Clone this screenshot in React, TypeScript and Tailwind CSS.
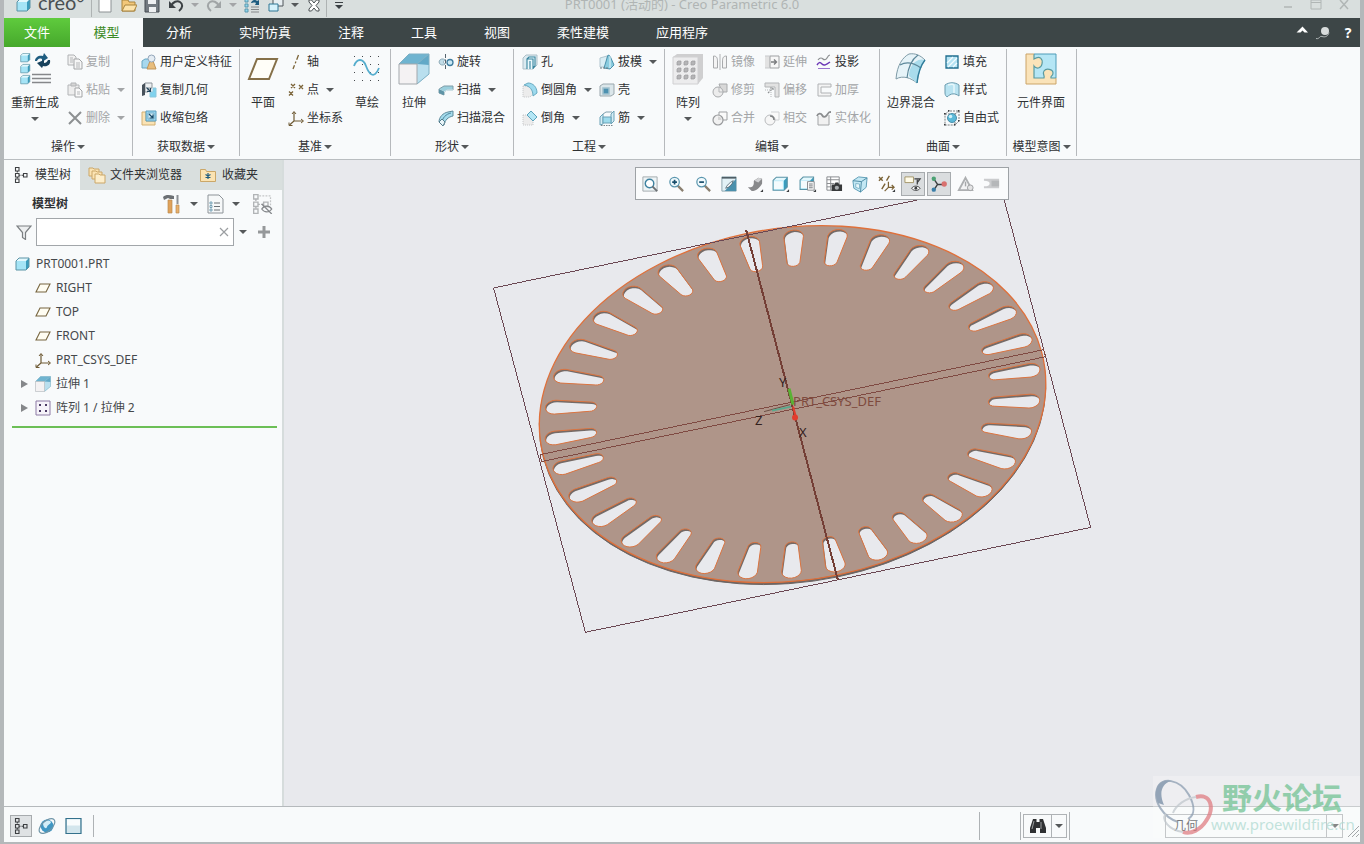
import React from "react";
import clsx from "clsx";

interface SvgProps {
  size?: number;
  box?: number;
  children: React.ReactNode;
}

const Svg: React.FC<SvgProps> = ({ size = 16, box = 16, children }) => (
  <svg width={size} height={size} viewBox={`0 0 ${box} ${box}`} fill="none" className="shrink-0" aria-hidden="true">
    {children}
  </svg>
);

const Caret = ({ light = false }: { light?: boolean }) => (
  <svg width="8" height="4" viewBox="0 0 8 4" className="shrink-0" aria-hidden="true">
    <path d="M0 0h8L4 4z" fill={light ? "#a3a5a7" : "#55585a"} />
  </svg>
);

/* ---------- shared shapes ---------- */

const Cube = ({ x = 0, y = 0, s = 1 }: { x?: number; y?: number; s?: number }) => (
  <g transform={`translate(${x} ${y}) scale(${s})`}>
    <path d="M1 5l3-3h10l-3 3z" fill="#e4f8fd" />
    <path d="M1 5h10v9H1z" fill="#a5e4f6" />
    <path d="M11 5l3-3v9l-3 3z" fill="#3b9cbc" />
    <path d="M1 5l3-3h10v9l-3 3H1z" stroke="#5a93a6" strokeWidth="1" />
  </g>
);

const TreeNodes = ({ color = "#3d3f42" }: { color?: string }) => (
  <g stroke={color} strokeWidth="1.1">
    <path d="M2.500 .500h3.500V4H2.500zM2.500 6.500h3.500V10H2.500zM2.500 12h3.500v3.500H2.500zM10.500 6.500H14V10h-3.500z" />
    <path d="M4.300 4v2.500M4.300 10v2M6 8.300h4.500" strokeDasharray="1.500 1" />
  </g>
);

const Plane = ({ w = 1.1 }: { w?: number }) => (
  <path d="M5 4h10l-4 8H1z" fill="#fffdf2" stroke="#776540" strokeWidth={w} />
);

const Csys = () => (
  <g stroke="#6f5b35" strokeWidth="1.2">
    <path d="M6 2v9h9M6 11l-4.500 4" />
    <path d="M4 4l2-2.500L8 4M13 9l2.500 2-2.500 2M1 12.500V15.500h3.500" strokeWidth="1" />
  </g>
);

const ExtrudeShape = () => (
  <g>
    <path d="M1 11L11 1h20v20L19 31V11z" fill="#a9d9ea" />
    <path d="M1 11L11 1h20L19 11z" fill="#6fb4d0" />
    <path d="M19 11L31 1v20L19 31z" fill="#b9dfee" />
    <path d="M19 11L31 1v11z" fill="#62a9c7" />
    <path d="M1 11L11 1h20v20L19 31M19 11L31 1" stroke="#7fb0c4" />
    <path d="M1 11h18v20H1z" fill="#f4f2f3" stroke="#a3a8ac" />
  </g>
);

/* ---------- ribbon icons ---------- */

const icons = {
  copy: (
    <Svg>
      <path d="M1 1h6l2 2v8H1z" fill="#f1f1f1" stroke="#b0b2b4" />
      <path d="M7 5h5l3 3v7H7z" fill="#f6f6f6" stroke="#a3a5a7" />
      <path d="M3 4h3M3 6h3M3 8h3M9 9h4M9 11h4M9 13h4" stroke="#b5b7b9" />
    </Svg>
  ),
  paste: (
    <Svg>
      <path d="M1 3h11v10H1z" fill="#ededed" stroke="#b3b5b7" />
      <path d="M4 1h5v3H4z" fill="#d5d5d5" stroke="#b3b5b7" />
      <path d="M8 6h4l3 3v6H8z" fill="#fafafa" stroke="#a3a5a7" />
      <path d="M10 10h3M10 12h3" stroke="#b5b7b9" />
    </Svg>
  ),
  remove: (
    <Svg>
      <path d="M2 2l12 12M14 2L2 14" stroke="#8d9092" strokeWidth="2" />
    </Svg>
  ),
  udf: (
    <Svg>
      <path d="M1 7l3-2h6v7l-2 2H1z" fill="#a7d8ee" stroke="#6aa6c1" />
      <path d="M6 15l3-8h3l3 8z" fill="#e8bd7c" stroke="#c1955a" />
      <circle cx="10.500" cy="4.500" r="3.500" fill="#e4ecf3" stroke="#93a6ba" />
    </Svg>
  ),
  copyGeom: (
    <Svg>
      <path d="M4 1h7v5H7v4H4z" fill="#eef1f3" stroke="#8b9399" />
      <path d="M1 3l3-2v12l-3 1z" fill="#48525b" />
      <path d="M9 10h3V6h3v9H9z" fill="#7fd2ee" stroke="#8cc8dd" />
      <path d="M5.500 5.500l4 4M9.500 6v3.500H6" stroke="#24455c" strokeWidth="1.200" />
    </Svg>
  ),
  shrink: (
    <Svg>
      <path d="M1 2h4v9h9v4H1z" fill="#fae3b5" stroke="#d3b072" />
      <path d="M5 1h10v10H5z" fill="#9bd5ef" stroke="#5a9fbf" />
      <path d="M7 3h6v6H7z" fill="#d9f0fa" stroke="#74afca" />
      <path d="M8 4l4 4M12 4.500V8H8.500" stroke="#174a69" strokeWidth="1.200" />
    </Svg>
  ),
  axis: (
    <Svg>
      <path d="M10.500 1L5 15" stroke="#7b6337" strokeWidth="1.300" strokeDasharray="5 2 2 2" />
    </Svg>
  ),
  point: (
    <Svg>
      <path d="M3 2l4 4M7 2L3 6M11 3l4 4M15 3l-4 4M1 9.500l4 4M5 9.500l-4 4" stroke="#7b6337" strokeWidth="1.300" />
    </Svg>
  ),
  csys: (
    <Svg>
      <Csys />
    </Svg>
  ),
  revolve: (
    <Svg>
      <path d="M1 8a3.500 3.500 0 016-2c-2 1-2 3 0 4a3.500 3.500 0 01-6-2z" fill="#c2dde8" stroke="#8fabb8" />
      <circle cx="12" cy="8.500" r="3" fill="#cbe9f5" stroke="#3f7d9f" strokeWidth="1.300" />
      <path d="M7.500 0v16" stroke="#55636d" strokeDasharray="4 1.500" />
    </Svg>
  ),
  sweep: (
    <Svg>
      <path d="M1 7l5-3h9v4H9l-3 2v3L1 11z" fill="#9bcfdd" stroke="#7f9da8" />
      <path d="M1 7l5 3M6 10l3-2h6" stroke="#dff3f9" />
      <path d="M1 7l5 2.500V13L1 11z" fill="#5f94a6" />
    </Svg>
  ),
  blend: (
    <Svg>
      <path d="M1 12c0-5 4-9 9-10l5-1v5c-5 1-8 4-9 9z" fill="#a4dbec" stroke="#5f8b9c" />
      <path d="M4 13c0-5 4-9 9-10" stroke="#4b839b" />
      <path d="M1 12l3-3 3 3-2 4z" fill="#e9f5f9" stroke="#557c8b" />
    </Svg>
  ),
  hole: (
    <Svg>
      <path d="M1 4l3-3h11v10l-4 4H1z" fill="#dbeaf0" stroke="#adc0c9" />
      <path d="M5 15V5h6v10M8 15V7M5 5l2-2h6v9l-2 2" fill="#eaf8fc" stroke="#35839d" strokeWidth="1.100" />
    </Svg>
  ),
  round: (
    <Svg>
      <path d="M1 4h3c5 0 7 4 7 8l-3 3H1z" fill="#ececec" stroke="#c3c5c7" strokeDasharray="1 1" />
      <path d="M2 3l4-2c5 0 9 4 9 10l-4 3c0-6-3-10-9-11z" fill="#9ddaee" stroke="#69abc2" />
    </Svg>
  ),
  chamfer: (
    <Svg>
      <path d="M1 5h5l5 5v5H1z" fill="#ececec" stroke="#c3c5c7" strokeDasharray="1 1" />
      <path d="M5 5l4-4 6 6-4 4z" fill="#b3e6f5" stroke="#5ba3bb" />
    </Svg>
  ),
  draft: (
    <Svg>
      <path d="M1 4l7-2v11H1z" fill="#d9edf4" stroke="#b0c5ce" />
      <path d="M5 14L9 1l2 1 4 9-4 4z" fill="#8accdf" stroke="#4b91ac" />
      <path d="M11 2v12" stroke="#e6f6fb" />
      <path d="M1 14h9" stroke="#6f7d84" strokeDasharray="2 1" />
    </Svg>
  ),
  shell: (
    <Svg>
      <path d="M1 4l3-2h11v10l-3 2H1z" fill="#dbe6ea" stroke="#9aa7ad" />
      <path d="M4 6h6v6H4z" fill="#4d91b0" stroke="#9fc0cd" strokeWidth="1.500" />
    </Svg>
  ),
  rib: (
    <Svg>
      <path d="M1 7l3-3v10l-3 1zM12 4l3-3v10l-3 3z" fill="#d5edf5" stroke="#6ba2b7" />
      <path d="M4 7h8v6H4z" fill="#9edbec" stroke="#6ba2b7" />
      <path d="M4 4l3-2h6" stroke="#83a1ae" />
      <path d="M2 15.500h12" stroke="#7b878d" strokeDasharray="1.500 1" />
    </Svg>
  ),
  mirror: (
    <Svg>
      <path d="M1.500 2c4 0 4 3 4 6v6h-4zM14.500 2c-4 0-4 3-4 6v6h4z" fill="#f4f4f4" stroke="#a8aaac" />
      <path d="M8 0v16" stroke="#b0b2b4" />
    </Svg>
  ),
  extend: (
    <Svg>
      <path d="M1 2h5v12H1z" fill="#e2e2e2" />
      <path d="M6 2h9v12H6z" fill="#f7f7f7" stroke="#9fa1a3" />
      <path d="M7 8h5M10 5.500L12.500 8 10 10.500" stroke="#7b7d7f" strokeWidth="1.400" />
      <path d="M1 2h5M1 14h5" stroke="#c7c9cb" />
    </Svg>
  ),
  project: (
    <Svg>
      <path d="M2 6c2-3 4-2 5-1s3 1 4-1 2-3 3-3" stroke="#8d9092" strokeWidth="1.200" />
      <path d="M1 11c2-3 3-3 5-1s4 1 8-2" stroke="#6a35b5" strokeWidth="1.500" />
      <path d="M2 14.500h12" stroke="#9a74cf" />
    </Svg>
  ),
  trim: (
    <Svg>
      <path d="M7 2h8v8h-5z" fill="#d8d8d8" stroke="#a8aaac" />
      <circle cx="6" cy="10" r="5" fill="#ececec" stroke="#a8aaac" />
      <path d="M7 5v5h5" stroke="#b5b7b9" />
    </Svg>
  ),
  offset: (
    <Svg>
      <path d="M1 1h14v14h-4V5H1z" fill="#e2e2e2" stroke="#b3b5b7" />
      <path d="M4 11l5-5M6 6h3v3" stroke="#8d8f91" strokeWidth="1.200" strokeDasharray="2 1" />
      <path d="M1 8h6v7" stroke="#b5b7b9" strokeDasharray="1 1" />
    </Svg>
  ),
  thicken: (
    <Svg>
      <path d="M15 2H2v12h13v-3H5V5h10z" fill="#f4f4f4" stroke="#b0b2b4" />
    </Svg>
  ),
  merge: (
    <Svg>
      <path d="M7 2h8v8h-4" fill="#fafafa" stroke="#9fa1a3" />
      <path d="M7 2v4" stroke="#9fa1a3" />
      <circle cx="6" cy="10" r="5" fill="#f1f1f1" stroke="#97999b" strokeWidth="1.200" />
      <path d="M6 6.500a3.500 3.500 0 013.500 3.500H6z" fill="#d5d5d5" />
    </Svg>
  ),
  intersect: (
    <Svg>
      <path d="M7 2h8v8h-4" fill="#fafafa" stroke="#d0d2d4" />
      <circle cx="6" cy="10" r="5" fill="#f6f6f6" stroke="#b9bbbd" />
      <path d="M6 6c3 0 4 2 4 4" stroke="#7f8183" strokeWidth="1.600" />
    </Svg>
  ),
  solidify: (
    <Svg>
      <path d="M2 6v9h11V5" fill="#f1f1f1" stroke="#a3a5a7" />
      <path d="M1 6c1-3 4-3 5-1s3 3 5 0 2-3 4-3" stroke="#8b8d8f" strokeWidth="1.800" />
    </Svg>
  ),
  fill: (
    <Svg>
      <path d="M2 2h12v12H2z" fill="#b5e3f3" stroke="#1f6e8f" strokeWidth="1.300" />
      <path d="M3 9l6-6M4 13l9-9M9 13l4-4" stroke="#f2fbfe" strokeWidth="1.200" />
    </Svg>
  ),
  style: (
    <Svg>
      <path d="M1 3c4-3 10-3 14 0v11c-4-3-8-3-12 1-1-1-2-2-2-4z" fill="#b9e3f1" stroke="#6b9bae" />
      <path d="M4 3c3-1 5-1 6 0v8" stroke="#e8f7fb" strokeWidth="1.500" />
    </Svg>
  ),
  freestyle: (
    <Svg>
      <path d="M1 4l4-3h10v10l-4 4H1zM1 4h10v11M11 4l4-3" stroke="#7c8084" strokeDasharray="2 1" />
      <circle cx="8" cy="8" r="4.500" fill="#5cb9d9" stroke="#4b90ab" />
      <circle cx="6.500" cy="6.500" r="1.800" fill="#d2f1fa" />
      <path d="M0 3h1.500v1.500H0zM4 0h1.500v1.500H4zM14 0h1.500v1.500H14zM0 14h1.500v1.500H0zM10 14h1.500v1.500H10zM14 10h1.500v1.500H14z" fill="#3c3e40" />
    </Svg>
  ),
};

const bigIcons = {
  regenerate: (
    <Svg size={32} box={32}>
      <Cube x={1} y={-1} s={0.7} />
      <Cube x={1} y={10} s={0.7} />
      <Cube x={1} y={21} s={0.7} />
      <path d="M13 21.500h19M13 25.500h19M13 29.500h19" stroke="#85878a" strokeWidth="1.400" />
      <path d="M16 8c0-4 4-6 8-5l1-3 4 5-6 4v-3c-3-1-4 0-5 2z" fill="#1f5d80" />
      <path d="M31 7c1 5-3 7-7 6l-1 2-5-5 7-3v3c2 0 3-1 4-3z" fill="#17415c" />
    </Svg>
  ),
  plane: (
    <Svg size={32} box={32}>
      <path d="M10 6h20l-8 20H2z" fill="#fffef8" stroke="#857049" strokeWidth="2" />
    </Svg>
  ),
  sketch: (
    <Svg size={32} box={32}>
      <g stroke="#44484c" strokeDasharray="1 7">
        <path d="M3 3.500h28M3 11.500h28M3 19.500h28M3 27.500h28" />
      </g>
      <path d="M3 13c3-8 9-8 12 0s8 14 13 2" stroke="#55adcd" strokeWidth="1.800" />
    </Svg>
  ),
  extrude: (
    <Svg size={32} box={32}>
      <ExtrudeShape />
    </Svg>
  ),
  pattern: (
    <Svg size={32} box={32}>
      <path d="M1 4l4-3h26v24l-5 6H1z" fill="#cfcfd0" />
      <path d="M1 4h25v27H1z" fill="#ececed" stroke="#d0d0d2" />
      {[8, 15, 22].map((y) =>
        [5, 12, 19].map((x) => (
          <path key={`${x}-${y}`} d={`M${x} ${y + 1}l1-1h3v3l-1 1h-3z`} fill="#b5b5b7" stroke="#9b9b9d" strokeWidth="0.700" />
        ))
      )}
    </Svg>
  ),
  boundary: (
    <Svg size={32} box={32}>
      <path d="M1 26C2 12 8 4 14 1c6-1 11 1 16 6-4 5-7 13-8 23-6-5-14-8-21-4z" fill="#e6f3f8" stroke="#7f9ba7" />
      <path d="M20 9c4-3 7-3 10-2-4 5-7 13-8 23l-8-7c0-6 2-10 6-14z" fill="#a9dcec" />
      <path d="M23 2c-7 5-10 13-11 23M5 12c7-4 14-2 21 3" stroke="#5c8799" strokeWidth="1.200" />
      <path d="M30 7c-4 5-7 13-8 23" stroke="#2f7d9b" strokeWidth="1.400" />
    </Svg>
  ),
  component: (
    <Svg size={32} box={32}>
      <path d="M1 1h30v30H1z" fill="#b5e6f5" />
      <path d="M1 1h8v5c6-4 9 0 8 5s-6 5-8 2v12h10c1-3-2-4 0-7s9-2 9 2-3 2-2 5h5v6H1z" fill="#fae3b9" />
      <path d="M9 1v5c6-4 9 0 8 5s-6 5-8 2v12h10c1-3-2-4 0-7s9-2 9 2-3 2-2 5h5" stroke="#5a9aa0" strokeWidth="1.200" />
      <path d="M1 31V1h8M1 31h30v-6" stroke="#cba468" />
      <path d="M9 1h22v24" stroke="#4f9cb8" />
    </Svg>
  ),
};

/* ---------- ribbon building blocks ---------- */

interface RibbonItemProps {
  icon: React.ReactNode;
  label: string;
  arrow?: boolean;
  disabled?: boolean;
}

const RibbonItem: React.FC<RibbonItemProps> = ({ icon, label, arrow, disabled }) => (
  <button
    disabled={disabled}
    className={clsx(
      "flex h-7 items-center gap-[3px] whitespace-nowrap text-xs",
      disabled ? "text-[#a3a5a7]" : "text-[#2f3133]"
    )}
  >
    {icon}
    <span>{label}</span>
    {arrow && (
      <span className="ml-1">
        <Caret light={disabled} />
      </span>
    )}
  </button>
);

const BigButton: React.FC<{ icon: React.ReactNode; label: string; arrow?: boolean; className: string }> = ({
  icon,
  label,
  arrow,
  className,
}) => (
  <button className={clsx("flex h-21 shrink-0 flex-col items-center pt-[5px] text-xs whitespace-nowrap", className)}>
    {icon}
    <span className="mt-2.5 h-4 leading-4">{label}</span>
    {arrow && (
      <span className="mt-1.5 flex">
        <Caret />
      </span>
    )}
  </button>
);

const Group: React.FC<{ label: string; className: string; children: React.ReactNode }> = ({
  label,
  className,
  children,
}) => (
  <section className={clsx("flex shrink-0 items-start", className)}>
    <div className="min-w-0 flex-1 pt-px">
      <div className="flex">{children}</div>
      <button className="flex h-7 w-full items-center justify-center gap-0.5 pt-px text-xs whitespace-nowrap">
        {label}
        <Caret />
      </button>
    </div>
    <div className="my-0.5 h-[107px] w-px bg-[#b6b9bc]" />
  </section>
);

const Column: React.FC<{ className?: string; children: React.ReactNode }> = ({ className, children }) => (
  <div className={clsx("flex shrink-0 flex-col items-start", className)}>{children}</div>
);

const Ribbon = () => (
  <div className="flex h-[113px] overflow-hidden border-b border-[#b9bdc0] bg-[#f8fafb] text-[#2f3133]">
    <Group label="操作" className="w-[129px]">
      <BigButton icon={bigIcons.regenerate} label="重新生成" arrow className="w-[62px]" />
      <Column className="ml-px">
        <RibbonItem icon={icons.copy} label="复制" disabled />
        <RibbonItem icon={icons.paste} label="粘贴" arrow disabled />
        <RibbonItem icon={icons.remove} label="删除" arrow disabled />
      </Column>
    </Group>
    <Group label="获取数据" className="w-[107px]">
      <Column className="ml-2">
        <RibbonItem icon={icons.udf} label="用户定义特征" />
        <RibbonItem icon={icons.copyGeom} label="复制几何" />
        <RibbonItem icon={icons.shrink} label="收缩包络" />
      </Column>
    </Group>
    <Group label="基准" className="w-[151px]">
      <BigButton icon={bigIcons.plane} label="平面" className="w-[46px]" />
      <Column className="ml-0.5 w-[61px]">
        <RibbonItem icon={icons.axis} label="轴" />
        <RibbonItem icon={icons.point} label="点" arrow />
        <RibbonItem icon={icons.csys} label="坐标系" />
      </Column>
      <BigButton icon={bigIcons.sketch} label="草绘" className="w-9" />
    </Group>
    <Group label="形状" className="w-[123px]">
      <BigButton icon={bigIcons.extrude} label="拉伸" className="w-[46px]" />
      <Column className="ml-px">
        <RibbonItem icon={icons.revolve} label="旋转" />
        <RibbonItem icon={icons.sweep} label="扫描" arrow />
        <RibbonItem icon={icons.blend} label="扫描混合" />
      </Column>
    </Group>
    <Group label="工程" className="w-[151px]">
      <Column className="ml-2 w-[77px]">
        <RibbonItem icon={icons.hole} label="孔" />
        <RibbonItem icon={icons.round} label="倒圆角" arrow />
        <RibbonItem icon={icons.chamfer} label="倒角" arrow />
      </Column>
      <Column>
        <RibbonItem icon={icons.draft} label="拔模" arrow />
        <RibbonItem icon={icons.shell} label="壳" />
        <RibbonItem icon={icons.rib} label="筋" arrow />
      </Column>
    </Group>
    <Group label="编辑" className="w-[215px]">
      <BigButton icon={bigIcons.pattern} label="阵列" arrow className="w-[46px]" />
      <Column className="ml-px w-13">
        <RibbonItem icon={icons.mirror} label="镜像" disabled />
        <RibbonItem icon={icons.trim} label="修剪" disabled />
        <RibbonItem icon={icons.merge} label="合并" disabled />
      </Column>
      <Column className="w-13">
        <RibbonItem icon={icons.extend} label="延伸" disabled />
        <RibbonItem icon={icons.offset} label="偏移" disabled />
        <RibbonItem icon={icons.intersect} label="相交" disabled />
      </Column>
      <Column>
        <RibbonItem icon={icons.project} label="投影" />
        <RibbonItem icon={icons.thicken} label="加厚" disabled />
        <RibbonItem icon={icons.solidify} label="实体化" disabled />
      </Column>
    </Group>
    <Group label="曲面" className="w-[127px]">
      <BigButton icon={bigIcons.boundary} label="边界混合" className="w-[62px]" />
      <Column className="ml-0.5">
        <RibbonItem icon={icons.fill} label="填充" />
        <RibbonItem icon={icons.style} label="样式" />
        <RibbonItem icon={icons.freestyle} label="自由式" />
      </Column>
    </Group>
    <Group label="模型意图" className="w-[70px]">
      <BigButton icon={bigIcons.component} label="元件界面" className="w-[68px]" />
    </Group>
  </div>
);

/* ---------- title bar ---------- */

const QuickButton: React.FC<{ name: string; className?: string; children: React.ReactNode }> = ({
  name,
  className = "w-6",
  children,
}) => (
  <button aria-label={name} className={clsx("flex justify-center", className)}>
    {children}
  </button>
);

const TitleBar = () => (
  <header className="h-[18px] overflow-hidden bg-[#d9dfde]">
    <div className="-mt-2 flex h-[26px] items-center">
      <div className="flex flex-1 items-center">
        <span className="ml-3">
          <Svg>
            <Cube />
          </Svg>
        </span>
        <span className="ml-1.5 w-[53px] pb-1.5 font-[Lato] text-xl leading-5 text-[#4a5053]">creo°</span>
        <span className="h-6 w-px bg-[#aeb3b3]" />
        <QuickButton name="新建" className="ml-px w-6">
          <Svg>
            <path d="M2 0h9l3 3v12H2z" fill="#fff" stroke="#8c9193" />
          </Svg>
        </QuickButton>
        <QuickButton name="打开" className="w-[23px]">
          <Svg>
            <path d="M1 3h6l1 2h6v9H1z" fill="#f3c779" stroke="#a8843f" />
            <path d="M4 8h12l-3 6H1z" fill="#fde3ab" stroke="#a8843f" />
          </Svg>
        </QuickButton>
        <QuickButton name="保存">
          <Svg>
            <path d="M1 1h14v14H1z" fill="#737a80" stroke="#454b50" />
            <path d="M4 1h8v6H4zM5 10h7v5H5z" fill="#eef0f1" />
          </Svg>
        </QuickButton>
        <QuickButton name="撤消">
          <Svg>
            <path d="M3 9c2-4 6-6 9-4s3 6-1 9" stroke="#3b4144" strokeWidth="2" />
            <path d="M1 4v7h7z" fill="#3b4144" />
          </Svg>
        </QuickButton>
        <QuickButton name="撤消列表" className="w-3.5">
          <Caret light />
        </QuickButton>
        <QuickButton name="重做">
          <Svg>
            <path d="M13 9c-2-4-6-6-9-4s-3 6 1 9" stroke="#a0a5a6" strokeWidth="2" />
            <path d="M15 4v7H8z" fill="#a0a5a6" />
          </Svg>
        </QuickButton>
        <QuickButton name="重做列表" className="w-3.5">
          <Caret light />
        </QuickButton>
        <QuickButton name="重新生成">
          <Svg>
            <path d="M1 2h3v3H1zM1 7h3v3H1zM1 12h3v3H1z" fill="#90d7ed" stroke="#5a97ad" />
            <path d="M7 10h8M7 12.500h8M7 15h8" stroke="#85888a" />
            <path d="M7 6c1-3 4-4 6-2l2-1v5h-4l1-2c-2-1-3 0-5 0z" fill="#1f5d80" />
          </Svg>
        </QuickButton>
        <QuickButton name="窗口">
          <Svg>
            <path d="M5 1h10v8H5z" fill="#e7eef1" stroke="#50575b" />
            <path d="M1 7h9v7H1z" fill="#d5f1fb" stroke="#2f7694" />
          </Svg>
        </QuickButton>
        <QuickButton name="窗口列表" className="w-3.5">
          <Caret />
        </QuickButton>
        <QuickButton name="关闭窗口">
          <Svg>
            <path d="M3 3h2.500L8 6l2.500-3H13v2l-3 3.500 3 3.500v2h-2.500L8 11l-2.500 3H3v-2l3-3.500L3 5z" fill="#fff" stroke="#4a5053" />
          </Svg>
        </QuickButton>
        <span className="h-6 w-px bg-[#aeb3b3]" />
        <QuickButton name="自定义">
          <Svg>
            <path d="M4 5.500h8" stroke="#3b4144" />
            <path d="M4 8h8l-4 4z" fill="#3b4144" />
          </Svg>
        </QuickButton>
      </div>
      <h1 className="pb-0.5 text-[13px] leading-5 whitespace-nowrap text-[#b0b5b4]">PRT0001 (活动的) - Creo Parametric 6.0</h1>
      <div className="flex flex-1 justify-end gap-3">
        <button aria-label="最小化">
          <Svg>
            <path d="M4 10h8" stroke="#b0b6b5" strokeWidth="1.500" />
          </Svg>
        </button>
        <button aria-label="最大化">
          <Svg>
            <path d="M3 3h10v9H3zM3 5.500h10" stroke="#b0b6b5" />
          </Svg>
        </button>
        <button aria-label="关闭" className="mr-2">
          <Svg>
            <path d="M4 3l8 9M12 3l-8 9" stroke="#b0b6b5" strokeWidth="1.500" />
          </Svg>
        </button>
      </div>
    </div>
  </header>
);

const menuTabs = ["分析", "实时仿真", "注释", "工具", "视图", "柔性建模", "应用程序"];

const MenuTabs = () => (
  <nav className="flex h-[29px] items-stretch bg-[#3d4647] text-[13px] whitespace-nowrap text-white">
    <button className="w-[66px] bg-linear-to-b from-[#5fcb3d] to-[#46a82c]">文件</button>
    <button className="w-[73px] bg-[#f8fafb] text-[#3c8a26]">模型</button>
    <div className="flex flex-1 gap-px">
      {menuTabs.map((tab) => (
        <button key={tab} className="px-[23px]">
          {tab}
        </button>
      ))}
    </div>
    <div className="flex items-center gap-2 pr-1">
      <button aria-label="最小化功能区" className="pb-1">
        <Svg>
          <path d="M4.500 9.500l6-6 5.500 6h-3.500l-2-2-2 2z" fill="#fff" />
        </Svg>
      </button>
      <button aria-label="学习">
        <Svg>
          <circle cx="9" cy="6" r="4" fill="#d8dcdc" />
          <path d="M0 13.500c4 1 3-3 6-2s6 0 7-4" stroke="#b0b6b6" />
        </Svg>
      </button>
      <button aria-label="帮助" className="w-4 text-sm font-bold">
        ?
      </button>
    </div>
  </nav>
);

/* ---------- model tree ---------- */

const treePlane = (
  <Svg>
    <Plane />
  </Svg>
);

const treeItems = [
  { label: "RIGHT", icon: treePlane },
  { label: "TOP", icon: treePlane },
  { label: "FRONT", icon: treePlane },
  { label: "PRT_CSYS_DEF", icon: icons.csys },
  {
    label: "拉伸 1",
    branch: true,
    icon: (
      <Svg box={32}>
        <ExtrudeShape />
      </Svg>
    ),
  },
  {
    label: "阵列 1 / 拉伸 2",
    branch: true,
    icon: (
      <Svg>
        <path d="M1 1h14v14H1z" fill="#f6f3fa" stroke="#8d7aa5" />
        <path d="M4 4h2v2H4zM10 4h2v2h-2zM4 10h2v2H4zM10 10h2v2h-2z" fill="#4c3b66" />
      </Svg>
    ),
  },
];

const ModelTree = () => (
  <aside className="w-[280px] shrink-0 border-r-2 border-[#d6dcdc] bg-[#f8fafb] text-xs whitespace-nowrap text-[#45484b]">
    <div className="flex h-[30px] bg-[#d9dfde] text-[#2f3133]">
      <button className="flex w-[76px] items-center gap-1.5 bg-[#f8fafb] pl-[9px]">
        <Svg>
          <TreeNodes />
        </Svg>
        模型树
      </button>
      <button className="flex w-[116px] items-center gap-1 pl-2">
        <Svg size={18} box={18}>
          <path d="M1 2h4l1 1h5v7H1z" fill="#fbe3b2" stroke="#cba768" />
          <path d="M4 5h4l1 1h5v7H4z" fill="#fbe3b2" stroke="#cba768" />
          <path d="M7 8h4l1 1h5v8H7z" fill="#fdeecb" stroke="#cba768" />
        </Svg>
        文件夹浏览器
      </button>
      <button className="flex items-center gap-1.5 pl-1">
        <Svg>
          <path d="M.500 2.500h5l1 2h9v10H.500z" fill="#fbe3b2" stroke="#cba768" />
          <path d="M8 6v6M5.500 7.500l5 3M10.500 7.500l-5 3" stroke="#1f5d80" strokeWidth="1.200" />
        </Svg>
        收藏夹
      </button>
    </div>

    <div className="flex h-7 items-center pl-7 text-[#2f3133]">
      <h2 className="flex-1 text-xs font-bold">模型树</h2>
      <button aria-label="设置" className="flex items-center gap-2">
        <Svg size={20} box={20}>
          <path d="M1 3c3-3 7-2 11-1v3H8L6 4 2 6z" fill="#6c7074" />
          <path d="M6 6h4v13H6z" fill="#e0a25a" stroke="#b98951" strokeWidth="0.700" />
          <path d="M14.500 1h2v9h-2z" fill="#8c9094" />
          <path d="M14 11h3v8h-3z" fill="#e9b06b" stroke="#b98951" strokeWidth="0.700" />
        </Svg>
        <Caret />
      </button>
      <button aria-label="显示" className="ml-[7px] flex items-center gap-[7px]">
        <Svg size={20} box={20}>
          <path d="M3 1h11l4 4v14H3z" fill="#f6f8f9" stroke="#8d9398" />
          <path d="M9 9h6M9 12.500h6M9 16h6" stroke="#6a7075" />
          <path d="M5 8h2v2H5zM5 11.500h2v2H5zM5 15h2v2H5z" stroke="#4f86a0" strokeWidth="0.700" />
        </Svg>
        <Caret />
      </button>
      <button aria-label="隐藏项" className="mr-[9px] ml-[13px]">
        <Svg size={20} box={16}>
          <g transform="translate(-2 0)">
            <TreeNodes color="#b1b4b6" />
          </g>
          <path d="M5 1.500h9v8" stroke="#c4c6c8" strokeDasharray="1.500 1" />
          <path d="M7 12c2-3 6-3 8 0-2 3-6 3-8 0zM7 8l8 8" stroke="#85888b" />
        </Svg>
      </button>
    </div>

    <div className="flex h-7 items-center pl-3">
      <Svg>
        <path d="M1 2h14L9.500 8.500v7l-3-2v-5z" fill="#eceeef" stroke="#7b7f82" strokeWidth="1.200" />
      </Svg>
      <div className="ml-1 flex h-7 w-[198px] items-center border border-[#a2a6aa] bg-white">
        <input aria-label="过滤" className="h-full min-w-0 flex-1 px-1 outline-none" />
        <button aria-label="清除" className="mr-1">
          <Svg size={10} box={10}>
            <path d="M1 1l8 8M9 1L1 9" stroke="#9b9ea1" strokeWidth="1.200" />
          </Svg>
        </button>
      </div>
      <button aria-label="过滤选项" className="ml-[5px]">
        <Caret />
      </button>
      <button aria-label="添加" className="ml-[11px]">
        <Svg size={12} box={12}>
          <path d="M6 0v12M0 6h12" stroke="#95989a" strokeWidth="3" />
        </Svg>
      </button>
    </div>

    <ul className="mt-1.5 mr-[5px] ml-2 border-b-2 border-[#6cbf56] pb-1.5">
      <li className="flex h-6 items-center gap-[5px] pl-[3px]">
        <Svg>
          <Cube />
        </Svg>
        PRT0001.PRT
      </li>
      {treeItems.map((item) => (
        <li key={item.label} className="flex h-6 items-center gap-[5px] pl-2">
          <span className="flex w-[10px]">
            {item.branch && (
              <Svg size={10} box={10}>
                <path d="M1 1l7 4-7 4z" fill="#85878a" />
              </Svg>
            )}
          </span>
          {item.icon}
          {item.label}
        </li>
      ))}
    </ul>
  </aside>
);

/* ---------- graphics toolbar ---------- */

const Corner = () => <path d="M18 15v3h-3z" fill="#3c3e40" />;

const viewTools = [
  {
    name: "重新调整",
    icon: (
      <>
        <path d="M2 2h15v15H2z" fill="#eef4f6" stroke="#a3a9ad" />
        <circle cx="9" cy="9" r="4.500" fill="#fff" stroke="#3f82a0" strokeWidth="1.500" />
        <path d="M12 12l5 5" stroke="#6b6f72" strokeWidth="2" />
      </>
    ),
  },
  {
    name: "放大",
    icon: (
      <>
        <path d="M11 11l6 6" stroke="#8a7f70" strokeWidth="2.400" />
        <circle cx="8" cy="7.500" r="5" fill="#f1fafd" stroke="#5b96ae" strokeWidth="1.300" />
        <path d="M8 5v5M5.500 7.500h5" stroke="#174d6b" strokeWidth="1.800" />
      </>
    ),
  },
  {
    name: "缩小",
    icon: (
      <>
        <path d="M11 11l6 6" stroke="#8a7f70" strokeWidth="2.400" />
        <circle cx="8" cy="7.500" r="5" fill="#f1fafd" stroke="#5b96ae" strokeWidth="1.300" />
        <path d="M5.500 7.500h5" stroke="#174d6b" strokeWidth="1.800" />
      </>
    ),
  },
  {
    name: "重画",
    icon: (
      <>
        <path d="M2 2h15v15H2z" fill="#e2f1f6" stroke="#8aa3ae" />
        <path d="M17 4v13H5z" fill="#4b90ac" />
        <path d="M2 3h15" stroke="#3d4c54" strokeWidth="1.500" />
        <path d="M6 14c1-3 4-6 8-8-1 4-4 7-8 8z" fill="#f8fafb" stroke="#2d4653" strokeWidth="0.700" />
      </>
    ),
  },
  {
    name: "渲染选项",
    icon: (
      <>
        <path d="M2 13c3 0 5 0 6-3s-1-4 2-5l3-2 4 1v5c-2 4-6 8-11 8z" fill="#88898b" />
        <path d="M9 6l4-3 4 1-4 4z" fill="#d0d1d3" />
        <Corner />
      </>
    ),
  },
  {
    name: "显示样式",
    icon: (
      <>
        <Cube x={0} y={0} s={1.15} />
        <path d="M2 6.500h9.500v8.500H2z" fill="#f4fbfd" />
        <Corner />
      </>
    ),
  },
  {
    name: "已保存方向",
    icon: (
      <>
        <Cube x={0} y={0} s={1.1} />
        <path d="M2 6h8.500v8H2z" fill="#f4fbfd" />
        <path d="M9 7h7v9H9z" fill="#fff" stroke="#85898c" />
        <path d="M10.500 9.500h4M10.500 11.500h4M10.500 13.500h4" stroke="#6c7074" />
        <Corner />
      </>
    ),
  },
  {
    name: "视图管理器",
    icon: (
      <>
        <path d="M2 2h13v14H2z" fill="#fff" stroke="#85898c" />
        <path d="M2 5h13M2 9h8M2 12.500h5M6 2v14" stroke="#85898c" />
        <path d="M7 10h3l1-2h3l1 2h3v7H7z" fill="#37393b" />
        <circle cx="12.500" cy="13.500" r="2.200" fill="#a9adb0" />
      </>
    ),
  },
  {
    name: "透视图",
    icon: (
      <>
        <path d="M2 6l6-4 9 1-1 10-6 5-7-4z" fill="#c3e8f4" stroke="#5b9cb5" />
        <path d="M2 6l9 1 6-4M11 7l-1 11" stroke="#4b88a2" />
        <path d="M5 9l4 .5v5L5 13z" fill="#eaf8fc" stroke="#7fb5c9" />
      </>
    ),
  },
  {
    name: "基准显示过滤器",
    icon: (
      <>
        <path d="M1 2l4 4M5 2L1 6M12 1L9 6M7.500 9L4 15" stroke="#7b6337" strokeWidth="1.500" />
        <path d="M11 7v6h6M11 13l-4 4M14.500 10.500L17 13l-2.500 2.500" stroke="#7b6337" strokeWidth="1.300" />
        <Corner />
      </>
    ),
  },
  {
    name: "注释显示",
    pressed: true,
    icon: (
      <>
        <path d="M1 2h9v6H1z" fill="#fffbe8" stroke="#a39569" />
        <path d="M11 4h6l-3 4M14 5v5" stroke="#3c3e40" strokeWidth="1.300" />
        <path d="M8 14c2-3 7-3 9 0-2 3-7 3-9 0z" fill="#fff" stroke="#3c3e40" />
        <circle cx="12.500" cy="14" r="1.500" fill="#3c3e40" />
      </>
    ),
  },
  {
    name: "旋转中心",
    pressed: true,
    icon: (
      <>
        <path d="M8 10L4 4M8 10h7M8 10l-4 6" stroke="#3c3e40" strokeWidth="1.500" />
        <circle cx="4" cy="4" r="2.300" fill="#4ba173" />
        <circle cx="15" cy="9.500" r="2.800" fill="#d8716f" />
        <circle cx="4" cy="15.500" r="2.300" fill="#3a7ea8" />
      </>
    ),
  },
  {
    name: "仿真显示",
    icon: (
      <>
        <path d="M9 3l7 13H2z" fill="#f3f3f4" stroke="#adafb1" strokeWidth="2" />
        <path d="M9 7v5" stroke="#a5a7a9" strokeWidth="1.500" />
        <circle cx="14" cy="13.500" r="3" fill="#e3e3e4" stroke="#9c9ea0" />
      </>
    ),
  },
  {
    name: "结果显示",
    icon: (
      <>
        <path d="M1 4h16v10H1v-2c4 0 6-1 6-3S5 6 1 6z" fill="#cbccce" />
        <path d="M9 6h8v6H9z" fill="#b5b7b9" />
      </>
    ),
  },
];

const ViewToolbar = () => (
  <div className="absolute top-[7px] left-1/2 flex h-[33px] w-[374px] -translate-x-1/2 items-center justify-between border border-[#9ea2a6] bg-[#fafbfc] pr-1 pl-0.5">
    {viewTools.map((tool) => (
      <button
        key={tool.name}
        aria-label={tool.name}
        className={clsx(
          "flex h-6 w-6 shrink-0 items-center justify-center border",
          tool.pressed ? "border-[#a7abae] bg-[#dadddf]" : "border-transparent"
        )}
      >
        <Svg size={18} box={19}>
          {tool.icon}
        </Svg>
      </button>
    ))}
  </div>
);

/* ---------- 3D view ---------- */

// The disc is a unit circle seen in axonometric projection.
const CENTER = [792.5, 404.5];
const AXIS_U = [249.5, -52];
const AXIS_V = [-45.5, -171];
const SLOT_COUNT = 34;

const project = (x: number, y: number) =>
  [
    CENTER[0] + x * AXIS_U[0] + y * AXIS_V[0],
    CENTER[1] + x * AXIS_U[1] + y * AXIS_V[1],
  ]
    .map((n) => n.toFixed(1))
    .join(" ");

// tapered slot: wide round end towards the rim, narrow one towards the hub
const slotPath = (index: number) => {
  const turn = (index * 2 * Math.PI) / SLOT_COUNT;
  const points: string[] = [];
  const arc = (radius: number, r: number, from: number) => {
    for (let i = 0; i <= 10; i++) {
      const a = from + (i * Math.PI) / 10;
      const tx = r * Math.cos(a);
      const ry = radius + r * Math.sin(a);
      points.push(
        project(tx * Math.cos(turn) - ry * Math.sin(turn), tx * Math.sin(turn) + ry * Math.cos(turn))
      );
    }
  };
  arc(0.942, 0.039, 0);
  arc(0.803, 0.026, Math.PI);
  return `M${points.join("L")}Z`;
};

const slots = Array.from({ length: SLOT_COUNT }, (_, i) => slotPath(i)).join("");
const discMatrix = `matrix(${AXIS_U.join(" ")} ${AXIS_V.join(" ")} ${CENTER.join(" ")})`;

const Scene = () => (
  <svg
    className="absolute inset-0 h-full w-full font-['Noto_Sans','Noto_Sans_CJK_SC',sans-serif] text-[13px]"
    viewBox="284 160 1076 647"
    role="img"
    aria-label="PRT0001"
  >
    <defs>
      <clipPath id="slots">
        <path d={slots} />
      </clipPath>
    </defs>

    <g transform="translate(0 2)">
      <circle r="1" transform={discMatrix} fill="#6d6563" stroke="#6d6563" vectorEffect="non-scaling-stroke" />
    </g>
    <circle r="1" transform={discMatrix} fill="#af9589" stroke="#e0703a" strokeWidth="1.300" vectorEffect="non-scaling-stroke" />

    <path d={slots} fill="#756a66" />
    <g clipPath="url(#slots)">
      <path d={slots} fill="#e8e9ed" transform="translate(1 2)" />
    </g>
    <path d={slots} fill="none" stroke="#dc7440" strokeWidth="1" />

    <g fill="none" stroke="#6b4853" shapeRendering="crispEdges">
      <path d="M493 288L585 633L1091 528L1000 183Z" />
      <path d="M540 455L1044 350L1046 357L541 462Z" stroke="#7f4a42" />
      <path d="M746 230L838 581" stroke="#743f36" strokeWidth="2" />
    </g>

    <path d="M790 405L764 412" stroke="#6b4e44" />
    <path d="M772 411L791 407" stroke="#58a98d" strokeWidth="2" />
    <path d="M789 389L793 405" stroke="#59b234" strokeWidth="3" />
    <path d="M793 407L796 418" stroke="#e23c2e" strokeWidth="2" />
    <circle cx="795" cy="418" r="3" fill="#e23c2e" />

    <text x="793" y="406" fill="#7e4a3e">
      PRT_CSYS_DEF
    </text>
    <g fill="#33201c">
      <text x="779" y="387">Y</text>
      <text x="755" y="425">Z</text>
      <text x="799" y="437">X</text>
    </g>
  </svg>
);

/* ---------- status bar ---------- */

const StatusBar = () => (
  <footer className="flex h-[36px] items-center border-t border-[#b5b9bc] bg-[#f8fafb] pt-0.5 text-xs text-[#45484b]">
    <button aria-label="导航器" className="ml-1.5 flex h-[22px] w-[22px] items-center justify-center border border-[#a7abae] bg-[#dfe2e4]">
      <Svg>
        <TreeNodes />
      </Svg>
    </button>
    <button aria-label="浏览器" className="ml-1.5">
      <Svg size={18} box={18}>
        <circle cx="9" cy="9" r="6.500" fill="#3f97c4" />
        <path d="M5 6c2-3 6-3 8-1-1 3-3 2-4 5s-4 0-4-4z" fill="#d3eef8" />
        <ellipse cx="9" cy="9" rx="9.500" ry="5" transform="rotate(-42 9 9)" stroke="#6f95a8" strokeWidth="1.200" />
      </Svg>
    </button>
    <button aria-label="全屏" className="ml-[9px]">
      <Svg size={18} box={18}>
        <path d="M1 1.500h15v15H1z" fill="#d3e6ed" stroke="#33718c" strokeWidth="1.200" />
        <path d="M2 2.500h13v6H2z" fill="#f8fcfd" />
      </Svg>
    </button>
    <span className="ml-2.5 h-[22px] w-px bg-[#aeb2b5]" />

    <div className="flex flex-1 items-center justify-end pr-[17px]">
      <span className="mr-10 h-7 w-px bg-[#aeb2b5]" />
      <div className="mr-[95px] flex h-7 items-center border-x border-[#aeb2b5] px-0.5">
        <div className="flex h-6 border border-[#aeb2b5]">
          <button aria-label="查找" className="flex w-[27px] items-center justify-center">
            <Svg size={18} box={18}>
              <path d="M4 2h3.500v3h3V2H14l3 9v5h-6v-5H7v5H1v-5z" fill="#2f3133" />
              <path d="M5 4l-2 8M12 5v7" stroke="#9b9ea0" />
            </Svg>
          </button>
          <button aria-label="查找选项" className="flex w-[15px] items-center justify-center border-l border-[#aeb2b5]">
            <Caret />
          </button>
        </div>
      </div>
      <div className="flex h-6 w-[178px] items-center border border-[#aeb2b5]">
        <select aria-label="选择过滤器" className="h-full min-w-0 flex-1 appearance-none bg-transparent pl-2 outline-none">
          <option>几何</option>
        </select>
        <span className="pointer-events-none flex h-full w-4 items-center justify-center border-l border-[#aeb2b5]">
          <Caret />
        </span>
      </div>
    </div>
  </footer>
);

const Watermark = () => (
  <div className="pointer-events-none absolute right-0 bottom-1 flex h-[62px] w-[207px] bg-white/35 opacity-80">
    <svg width="60" height="62" viewBox="0 0 60 62" fill="none" aria-hidden="true">
      <path d="M25 46C10 41 0 25 4 13 8 0 27 3 36 19c6 11 6 20-1 24" stroke="#95a5b7" strokeWidth="2" />
      <path d="M5 27C-1 14 6 2 18 5 8 8 6 18 11 29z" fill="#7f94aa" />
      <path d="M43 21c15-4 19 11 10 24-5 8-15 14-23 11" stroke="#e2868b" strokeWidth="4" />
      <path d="M30 56c-15-2-22-13-17-18M43 21c-10 1-20 8-23 16" stroke="#c6ccd1" strokeWidth="2" />
    </svg>
    <div className="whitespace-nowrap">
      <p className="mt-1 ml-[9px] h-8 font-['Noto_Sans_CJK_SC',sans-serif] text-[30px] leading-8 font-bold text-[#7cc79b]">野火论坛</p>
      <p className="mt-0.5 -ml-0.5 text-[15px] leading-5 text-[#b5ddd4]">www.proewildfire.cn</p>
    </div>
    <svg width="14" height="14" viewBox="0 0 14 14" className="absolute right-0 bottom-0" aria-hidden="true">
      <path d="M2 13L13 2M6 13l7-7M10 13l3-3" stroke="#8f9396" />
    </svg>
  </div>
);

export default function App() {
  return (
    <div className="relative flex min-h-screen flex-col overflow-hidden border-x-4 border-b-2 border-[#b4b8ba] bg-[#e8e9ed] font-['Noto_Sans','Noto_Sans_CJK_SC',sans-serif]">
      <TitleBar />
      <MenuTabs />
      <Ribbon />
      <main className="flex flex-1">
        <ModelTree />
        <div className="relative min-w-0 flex-1 overflow-hidden">
          <Scene />
          <ViewToolbar />
        </div>
      </main>
      <StatusBar />
      <Watermark />
    </div>
  );
}
